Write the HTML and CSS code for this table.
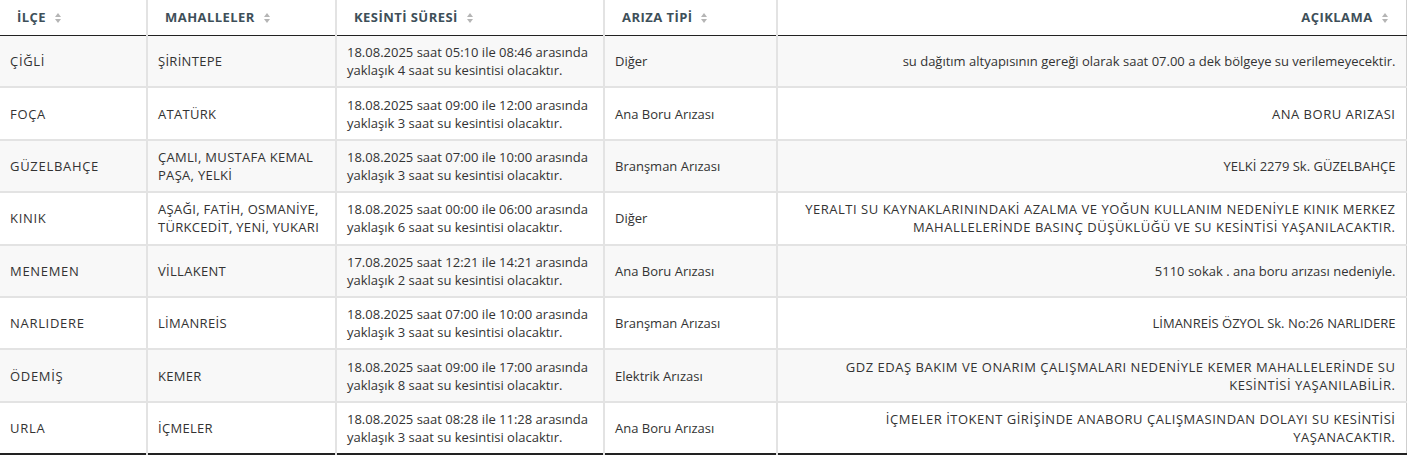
FILE: index.html
```html
<!DOCTYPE html>
<html lang="tr">
<head>
<meta charset="utf-8">
<link rel="stylesheet" href="styles.css">
</head>
<body>
<table class="outages">
  <colgroup>
    <col class="c1"><col class="c2"><col class="c3"><col class="c4"><col class="c5">
  </colgroup>
  <thead>
    <tr>
      <th>İLÇE <span class="sort"></span></th>
      <th>MAHALLELER <span class="sort"></span></th>
      <th>KESİNTİ SÜRESİ <span class="sort"></span></th>
      <th>ARIZA TİPİ <span class="sort"></span></th>
      <th class="right">AÇIKLAMA <span class="sort"></span></th>
    </tr>
  </thead>
  <tbody>
    <tr>
      <td class="caps">ÇİĞLİ</td><td class="caps narrow">ŞİRİNTEPE</td>
      <td>18.08.2025 saat 05:10 ile 08:46 arasında yaklaşık 4 saat su kesintisi olacaktır.</td>
      <td>Diğer</td>
      <td class="right">su dağıtım altyapısının gereği olarak saat 07.00 a dek bölgeye su verilemeyecektir.</td>
    </tr>
    <tr>
      <td class="caps">FOÇA</td><td class="caps narrow">ATATÜRK</td>
      <td>18.08.2025 saat 09:00 ile 12:00 arasında yaklaşık 3 saat su kesintisi olacaktır.</td>
      <td>Ana Boru Arızası</td>
      <td class="right caps wide">ANA BORU ARIZASI</td>
    </tr>
    <tr>
      <td class="caps">GÜZELBAHÇE</td><td class="caps narrow">ÇAMLI, MUSTAFA KEMAL PAŞA, YELKİ</td>
      <td>18.08.2025 saat 07:00 ile 10:00 arasında yaklaşık 3 saat su kesintisi olacaktır.</td>
      <td>Branşman Arızası</td>
      <td class="right">YELKİ 2279 Sk. GÜZELBAHÇE</td>
    </tr>
    <tr>
      <td class="caps">KINIK</td><td class="caps narrow">AŞAĞI, FATİH, OSMANİYE, TÜRKCEDİT, YENİ, YUKARI</td>
      <td>18.08.2025 saat 00:00 ile 06:00 arasında yaklaşık 6 saat su kesintisi olacaktır.</td>
      <td>Diğer</td>
      <td class="right caps wide">YERALTI SU KAYNAKLARININDAKİ AZALMA VE YOĞUN KULLANIM NEDENİYLE KINIK MERKEZ MAHALLELERİNDE BASINÇ DÜŞÜKLÜĞÜ VE SU KESİNTİSİ YAŞANILACAKTIR.</td>
    </tr>
    <tr>
      <td class="caps">MENEMEN</td><td class="caps narrow">VİLLAKENT</td>
      <td>17.08.2025 saat 12:21 ile 14:21 arasında yaklaşık 2 saat su kesintisi olacaktır.</td>
      <td>Ana Boru Arızası</td>
      <td class="right">5110 sokak . ana boru arızası nedeniyle.</td>
    </tr>
    <tr>
      <td class="caps">NARLIDERE</td><td class="caps narrow">LİMANREİS</td>
      <td>18.08.2025 saat 07:00 ile 10:00 arasında yaklaşık 3 saat su kesintisi olacaktır.</td>
      <td>Branşman Arızası</td>
      <td class="right">LİMANREİS ÖZYOL Sk. No:26 NARLIDERE</td>
    </tr>
    <tr>
      <td class="caps">ÖDEMİŞ</td><td class="caps narrow">KEMER</td>
      <td>18.08.2025 saat 09:00 ile 17:00 arasında yaklaşık 8 saat su kesintisi olacaktır.</td>
      <td>Elektrik Arızası</td>
      <td class="right caps wide">GDZ EDAŞ BAKIM VE ONARIM ÇALIŞMALARI NEDENİYLE KEMER MAHALLELERİNDE SU KESİNTİSİ YAŞANILABİLİR.</td>
    </tr>
    <tr>
      <td class="caps">URLA</td><td class="caps narrow">İÇMELER</td>
      <td>18.08.2025 saat 08:28 ile 11:28 arasında yaklaşık 3 saat su kesintisi olacaktır.</td>
      <td>Ana Boru Arızası</td>
      <td class="right caps wide">İÇMELER İTOKENT GİRİŞİNDE ANABORU ÇALIŞMASINDAN DOLAYI SU KESİNTİSİ YAŞANACAKTIR.</td>
    </tr>
  </tbody>
</table>
</body>
</html>
```

FILE: styles.css
```css
html, body {
  margin: 0;
  padding: 0;
  background: #fff;
}
body {
  font-family: "Open Sans", "DejaVu Sans", sans-serif;
  font-size: 13px;
  color: #333;
}
.outages {
  width: 1406px;
  border-collapse: collapse;
  table-layout: fixed;
  border-right: 1px solid #cfcfcf;
  border-bottom: 2px solid #222;
}
.c1 { width: 147px; }
.c2 { width: 189px; }
.c3 { width: 268px; }
.c4 { width: 173px; }
.c5 { width: 629px; }
.outages th {
  text-align: left;
  font-weight: 700;
  color: #3e4f59;
  font-size: 13px;
  letter-spacing: 0.45px;
  height: 35px;
  padding: 0 17px;
  box-sizing: border-box;
  border-left: 2px solid #e3e3e3;
  border-bottom: 1px solid #222;
  white-space: nowrap;
}
.outages th:first-child,
.outages td:first-child {
  border-left: none;
}
.outages td {
  padding: 7px 10px;
  line-height: 18px;
  height: 52.4px;
  box-sizing: border-box;
  vertical-align: middle;
  border-left: 2px solid #e3e3e3;
  border-top: 2px solid #e3e3e3;
}
.outages td.caps {
  letter-spacing: 0.7px;
}
.outages td.caps.narrow {
  letter-spacing: 0.3px;
}
.outages td.caps.wide {
  letter-spacing: 0.52px;
}
.outages tbody tr:first-child td {
  border-top: none;
}
.outages tbody tr:nth-child(odd) {
  background: #f8f8f8;
}
.outages .right {
  text-align: right;
}
.sort {
  display: inline-block;
  width: 7px;
  height: 10px;
  margin-left: 5px;
  vertical-align: -1px;
  position: relative;
}
.sort::before,
.sort::after {
  content: "";
  position: absolute;
  left: 0;
  border-left: 3.5px solid transparent;
  border-right: 3.5px solid transparent;
}
.sort::before {
  top: 0;
  border-bottom: 4px solid #b5b5b5;
}
.sort::after {
  bottom: 0;
  border-top: 4px solid #b5b5b5;
}
```
